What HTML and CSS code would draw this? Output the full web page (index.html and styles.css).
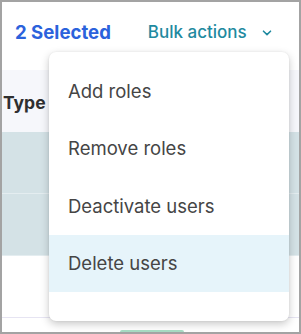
FILE: index.html
```html
<!DOCTYPE html>
<html lang="en">
<head>
    <meta charset="UTF-8">
    <meta name="viewport" content="width=device-width, initial-scale=1.0">
    <title>Users</title>
    <link rel="stylesheet" href="styles.css">
</head>
<body>
    <div class="frame">
        <div class="toolbar">
            <span class="selected-count">2 Selected</span>
            <button class="bulk-btn">
                Bulk actions
                <svg class="chevron" width="10" height="6" viewBox="0 0 10 6">
                    <path d="M1.5 1.2 L5 4.6 L8.5 1.2" fill="none" stroke="#1f8aa0" stroke-width="1.6" stroke-linecap="round" stroke-linejoin="round"/>
                </svg>
            </button>
        </div>

        <div class="table">
            <div class="row head"><b>Type</b></div>
            <div class="row picked"></div>
            <div class="row picked"></div>
            <div class="row plain"></div>
            <div class="row tail"><span class="pill"></span></div>
        </div>

        <!-- menu floats above the table -->
        <ul class="menu">
            <li>Add roles</li>
            <li>Remove roles</li>
            <li>Deactivate users</li>
            <li class="active">Delete users</li>
        </ul>
    </div>
</body>
</html>
```

FILE: styles.css
```css
body {
    margin: 0;
    font-family: Inter, "Noto Sans", sans-serif;
    background: #fff;
}

.frame {
    position: relative;
    width: 301px;
    height: 334px;
    box-sizing: border-box;
    border: 2px solid #a3a3a3;
    overflow: hidden;
    background: #fff;
}

.toolbar {
    display: flex;
    align-items: center;
    height: 64px;
    padding: 0 0 4px 13px;
    box-sizing: border-box;
}

.selected-count {
    color: #2b62dc;
    font-size: 18.6px;
    font-weight: 700;
}

.bulk-btn {
    display: flex;
    align-items: center;
    gap: 15px;
    margin-left: 37px;
    padding: 0;
    border: none;
    background: none;
    color: #1f8aa0;
    font-family: inherit;
    font-size: 17px;
    font-weight: 500;
}

.chevron {
    margin-top: 2px;
}

.table {
    margin-top: 4px;
}

.row {
    display: flex;
    align-items: center;
    border-bottom: 1px solid #e6e4f2;
    box-sizing: border-box;
}

.head {
    height: 62px;
    background: #f6f7fb;
    border-bottom: none;
    padding: 2px 0 0 1px;
    font-size: 17.5px;
    color: #2f2f2f;
}

.picked {
    height: 62px;
    background: #d4e2e6;
    border-bottom-color: #e4edf0;
}

.plain {
    height: 62px;
}

.tail {
    height: 14px;
    border-bottom: none;
    align-items: flex-end;
}

.pill {
    width: 64px;
    height: 2px;
    margin-left: 118px;
    border-radius: 2px 2px 0 0;
    background: #a8dcc4;
}

.menu {
    position: absolute;
    left: 47px;
    top: 50px;
    width: 240px;
    height: 269px;
    margin: 0;
    padding: 10px 0 0;
    box-sizing: border-box;
    list-style: none;
    background: #fff;
    border-radius: 7px;
    box-shadow: 0 3px 8px rgba(0, 0, 0, 0.22), 0 0 2px rgba(0, 0, 0, 0.08);
}

.menu li {
    display: flex;
    align-items: center;
    height: 57.5px;
    padding-left: 19px;
    font-size: 18.5px;
    color: #454545;
}

.menu li.active {
    background: #e6f4fa;
}
```
